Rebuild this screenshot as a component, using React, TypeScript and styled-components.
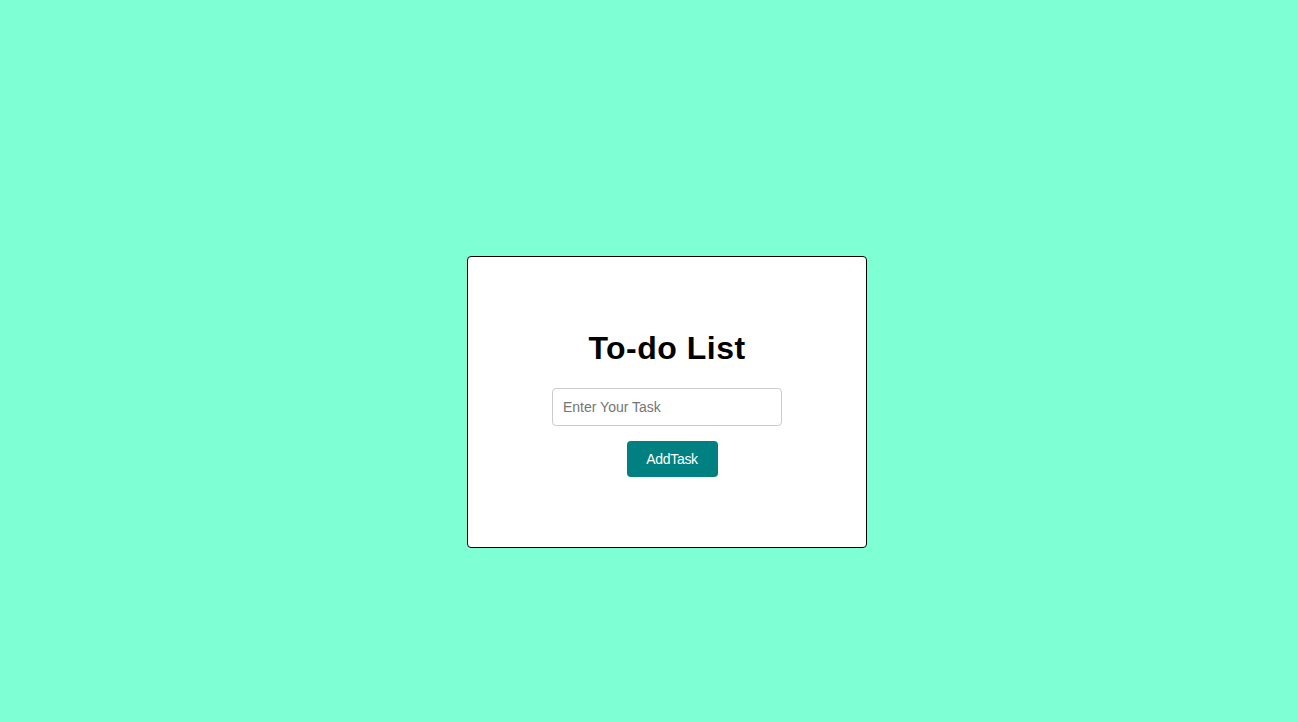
import React, { useState } from "react";
import styled, { createGlobalStyle } from "styled-components";

const GlobalStyle = createGlobalStyle`
  html, body {
    margin: 0;
    padding: 0;
    background: #7fffd4;
    font-family: "Liberation Sans", Arial, sans-serif;
  }
`;

const Page = styled.div`
  box-sizing: border-box;
  width: 100%;
  height: 722px;
  padding: 82px 0 0 36px;
  display: flex;
  align-items: center;
  justify-content: center;
  background: #7fffd4;
`;

const Card = styled.div`
  box-sizing: border-box;
  width: 400px;
  height: 292px;
  background: #ffffff;
  border: 1px solid #000000;
  border-radius: 4px;
  padding-top: 73px;
  text-align: center;
`;

const Title = styled.h1`
  margin: 0 0 21px;
  font-family: "Liberation Sans", Arial, sans-serif;
  font-size: 32px;
  font-weight: bold;
  color: #000000;
  letter-spacing: 0.5px;
`;

const Form = styled.div`
  width: 240px;
  margin: 0 auto;
  text-align: center;
  line-height: 0;
`;

const Input = styled.input`
  box-sizing: border-box;
  width: 230px;
  height: 38px;
  padding: 10px;
  font-family: "Liberation Sans", Arial, sans-serif;
  font-size: 14px;
  border: 1px solid #cccccc;
  border-radius: 4px;
  outline: none;
  vertical-align: top;
  &::placeholder {
    color: #757575;
  }
`;

const Button = styled.button`
  box-sizing: border-box;
  margin: 15px 0 0 10px;
  width: 91px;
  height: 36px;
  padding: 0;
  background: #008080;
  color: #ffffff;
  border: none;
  border-radius: 4px;
  font-family: "Liberation Sans", Arial, sans-serif;
  font-size: 14px;
  letter-spacing: -0.3px;
  cursor: pointer;
  vertical-align: top;
`;

export default function App() {
  const [task, setTask] = useState("");
  return (
    <>
      <GlobalStyle />
      <Page>
        <Card>
          <Title>To-do List</Title>
          <Form>
            <Input
              placeholder="Enter Your Task"
              value={task}
              onChange={(e) => setTask(e.target.value)}
            />
            <Button>AddTask</Button>
          </Form>
        </Card>
      </Page>
    </>
  );
}
